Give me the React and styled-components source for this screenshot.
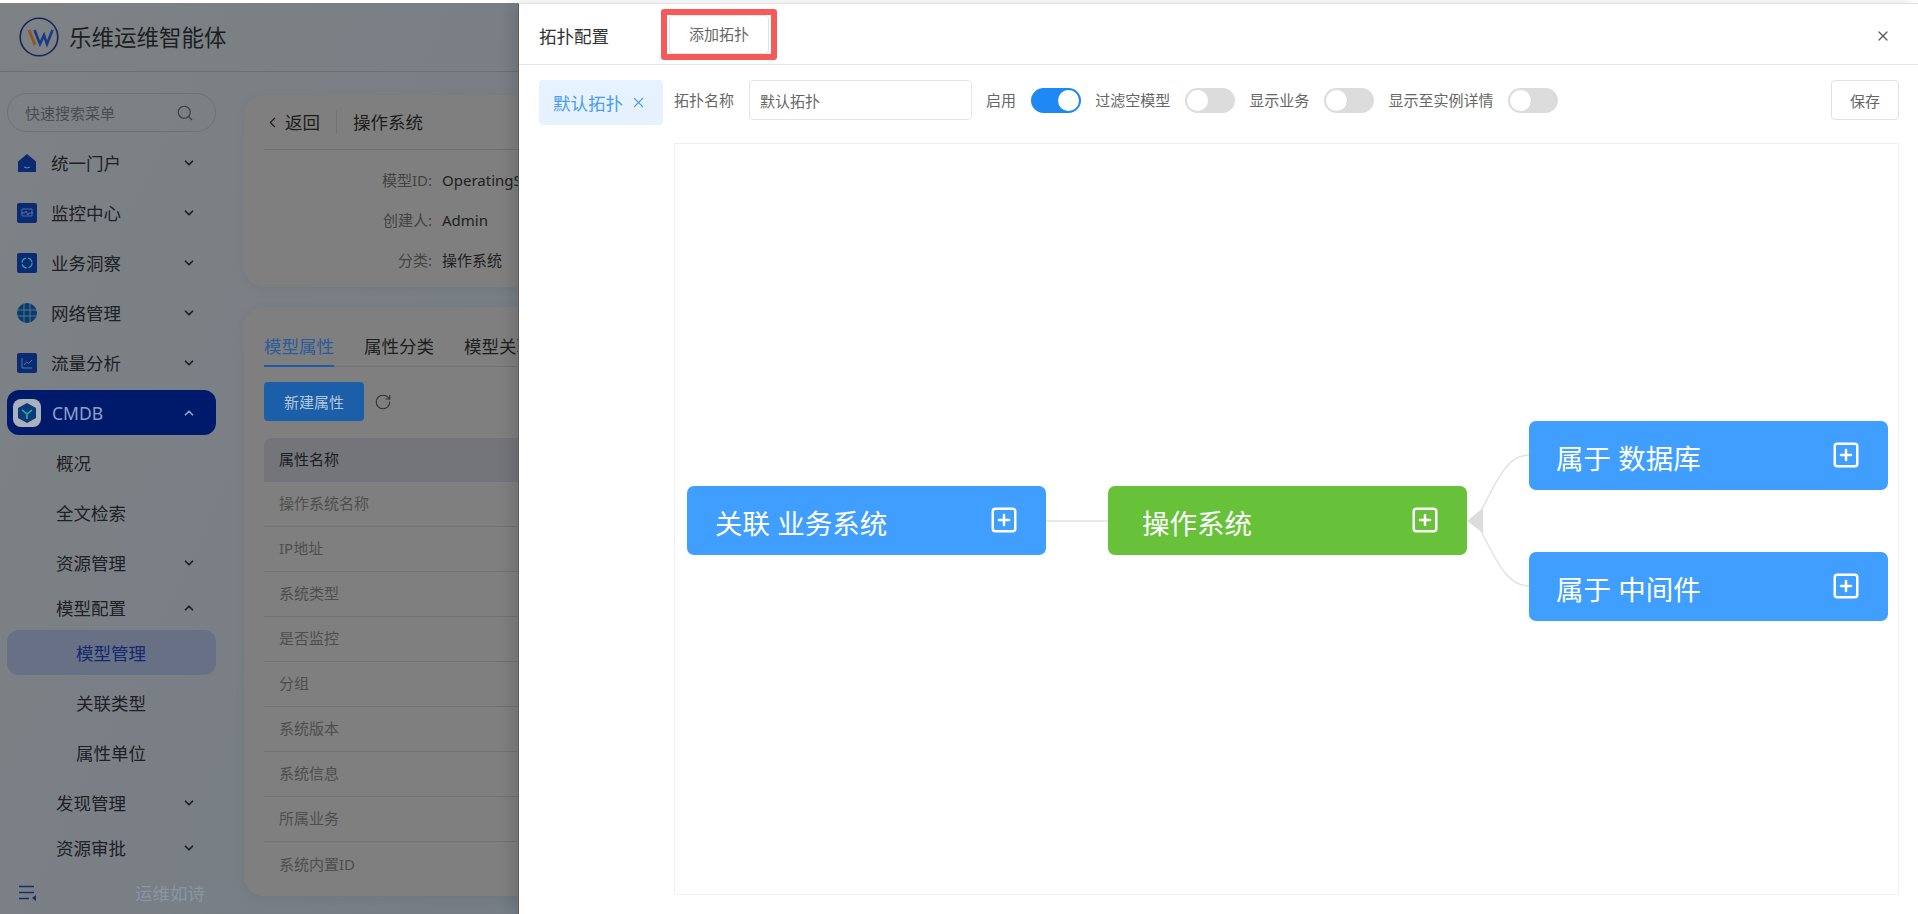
import styled, { createGlobalStyle } from "styled-components";
import { ChevronDown, ChevronUp, ChevronLeft, Search, RotateCw, X, SquarePlus } from "lucide-react";

const GlobalStyle = createGlobalStyle`
  html, body {
    margin: 0;
    padding: 0;
    background: #fff;
  }
  * {
    box-sizing: border-box;
  }
  body {
    font-family: "Noto Sans", "Noto Sans CJK SC", sans-serif;
  }
`;

const Page = styled.div`
  position: relative;
  width: 1918px;
  height: 914px;
  padding-top: 3px;
  overflow: hidden;
  background: #fff;
`;

/* dimmed page behind the drawer */
const Shell = styled.div`
  width: 100%;
  height: 911px;
  display: flex;
  flex-direction: column;
  background: linear-gradient(115deg, #7e8285 0%, #747c85 45%, #787a7e 100%);
`;

const Header = styled.header`
  height: 69px;
  flex: none;
  display: flex;
  align-items: center;
  gap: 10px;
  padding: 0 0 0 19px;
  border-bottom: 1px solid #6c6f72;
  font-size: 22.5px;
  line-height: 30px;
  color: #1c1f22;
  span {
    padding-top: 2px;
  }
`;

const Main = styled.div`
  flex: 1;
  min-height: 0;
  display: flex;
`;

const Sidebar = styled.aside`
  width: 244px;
  flex: none;
  padding: 21px 0 0 7px;
`;

const SearchBox = styled.div`
  width: 209px;
  height: 39px;
  display: flex;
  align-items: center;
  justify-content: space-between;
  padding: 0 21px 0 17px;
  margin-bottom: 8px;
  border: 1px solid #6e7378;
  border-radius: 20px;
  font-size: 15px;
  line-height: 20px;
  color: #4a4d50;
  svg {
    color: #3c3f42;
  }
`;

const MenuRow = styled.div`
  width: 209px;
  height: 45px;
  display: flex;
  align-items: center;
  gap: 14px;
  margin-bottom: ${(p) => (p.$tight ? "0" : "5px")};
  padding-left: ${(p) => (p.$level === 2 ? "69px" : p.$level === 1 ? "49px" : p.$active ? "6px" : "10px")};
  border-radius: 12px;
  font-size: 17.5px;
  line-height: 24px;
  color: ${(p) => (p.$selected ? "#12296e" : p.$active ? "#8ea0c4" : "#1d2024")};
  background: ${(p) => (p.$active ? "#001a6b" : p.$selected ? "#687085" : "transparent")};
`;

const MenuLabel = styled.span`
  flex: 1;
`;

const Caret = styled.span`
  width: 14px;
  margin-right: 20px;
  display: flex;
  justify-content: center;
  color: ${(p) => (p.$light ? "#8ea0c4" : "#1d2024")};
`;

const SideFoot = styled.div`
  width: 209px;
  height: 45px;
  display: flex;
  align-items: center;
  justify-content: space-between;
  padding: 0 11px 0 12px;
  font-size: 17.5px;
  color: #8a95a3;
`;

const Content = styled.main`
  flex: 1;
  padding-top: 23px;
  display: flex;
  flex-direction: column;
  gap: 20px;
`;

const Card = styled.section`
  width: 1640px;
  height: ${(p) => p.$height}px;
  padding: 0 20px;
  background: #7f7f7f;
  border-radius: 20px;
  box-shadow: 0 2px 10px rgba(60, 64, 70, 0.1);
`;

const TitleBar = styled.div`
  height: 55px;
  display: flex;
  align-items: center;
  padding: 0 8px 0 0;
  border-bottom: 1px solid #6f7072;
  font-size: 17.5px;
  line-height: 24px;
  color: #1c1c1c;
`;

const BackLink = styled.span`
  display: flex;
  align-items: center;
  gap: 4px;
  padding-right: 16px;
  margin-right: 16px;
  border-right: 1px solid #737373;
`;

const InfoList = styled.dl`
  margin: 10px 0 0;
`;

const InfoRow = styled.div`
  height: 40px;
  display: flex;
  align-items: center;
  gap: 10px;
  font-size: 15px;
  line-height: 20px;
  dt {
    width: 168px;
    text-align: right;
    color: #444;
  }
  dd {
    margin: 0;
    color: #1e1e1e;
  }
`;

const Tabs = styled.div`
  height: 60px;
  display: flex;
  align-items: flex-end;
  border-bottom: 1px solid #727272;
`;

const Tab = styled.span`
  height: 30px;
  margin-right: 15px;
  padding-right: 15px;
  position: relative;
  font-size: 17.5px;
  line-height: 18px;
  white-space: nowrap;
  color: ${(p) => (p.$active ? "#2b5c9e" : "#1e1e1e")};
  border-bottom: 2px solid ${(p) => (p.$active ? "#1f5ba6" : "transparent")};
  margin-bottom: -1px;
  ${(p) => p.$active && "padding-right: 0; margin-right: 30px;"}
`;

const Actions = styled.div`
  display: flex;
  align-items: center;
  gap: 10px;
  margin: 15px 0 17px;
  color: #333;
`;

const PrimaryButton = styled.div`
  width: 100px;
  height: 39px;
  display: flex;
  align-items: center;
  justify-content: center;
  background: #1a5fa8;
  border-radius: 4px;
  font-size: 15px;
  color: #b5c6da;
`;

const TableHead = styled.div`
  height: 44px;
  display: flex;
  align-items: center;
  padding: 0 0 4px 15px;
  background: #73757a;
  border-radius: 8px 8px 0 0;
  font-size: 15px;
  color: #1c1c1c;
`;

const TableRow = styled.div`
  height: 45px;
  display: flex;
  align-items: center;
  padding: 0 0 3px 15px;
  border-bottom: ${(p) => (p.$last ? "none" : "1px solid #727272")};
  font-size: 15px;
  color: #4e4e4e;
`;

/* drawer */
const Drawer = styled.div`
  position: absolute;
  top: 3px;
  left: 518px;
  width: 1400px;
  height: 911px;
  display: flex;
  flex-direction: column;
  background: #fff;
  border-top: 1px solid #e2e2e2;
  border-left: 1px solid #5c5c5c;
  box-shadow: -6px 0 14px rgba(0, 0, 0, 0.12);
  color: #666;
`;

const DrawerHead = styled.div`
  height: 61px;
  flex: none;
  display: flex;
  align-items: center;
  padding: 0 20px;
  border-bottom: 1px solid #e6e6e6;
`;

const DrawerTitle = styled.h2`
  margin: 3px 60px 0 0;
  font-size: 17.5px;
  font-weight: 400;
  line-height: 24px;
  color: #333;
`;

const AddButton = styled.div`
  position: relative;
  width: 100px;
  height: 39px;
  margin-top: 1px;
  display: flex;
  align-items: center;
  justify-content: center;
  padding-bottom: 2px;
  border: 1px solid #e2e2e2;
  border-radius: 4px;
  font-size: 15px;
  color: #666;
`;

/* red annotation drawn over the button */
const Mark = styled.span`
  position: absolute;
  inset: -7px -9px;
  border: 6px solid #f55a5a;
  border-radius: 3px;
`;

const CloseButton = styled.span`
  margin: 4px 7px 0 auto;
  display: flex;
  color: #555;
`;

const DrawerBody = styled.div`
  flex: 1;
  min-height: 0;
  display: grid;
  grid-template-columns: 124px 1fr;
  column-gap: 11px;
  padding: 15px 20px 0;
`;

const TopoTab = styled.div`
  width: 124px;
  height: 45px;
  display: flex;
  align-items: center;
  gap: 7px;
  padding-left: 14px;
  background: #e6f2ff;
  border-radius: 4px;
  font-size: 17.5px;
  color: #4a9cf5;
`;

const Toolbar = styled.div`
  height: 40px;
  margin-bottom: 23px;
  display: flex;
  align-items: center;
  gap: 14.1px;
`;

const Field = styled.label`
  display: flex;
  align-items: center;
  gap: 15px;
  font-size: 15px;
  line-height: 20px;
  color: #666;
`;

const TextInput = styled.input`
  width: 223px;
  height: 40px;
  padding: 0 10px;
  border: 1px solid #e4e4e4;
  border-radius: 4px;
  font: inherit;
  color: #666;
  outline: none;
`;

const Switch = styled.span`
  width: 50px;
  height: 25px;
  padding: 2px;
  display: flex;
  justify-content: ${(p) => (p.$on ? "flex-end" : "flex-start")};
  border-radius: 13px;
  background: ${(p) => (p.$on ? "#1e88f5" : "#dcdcdc")};
  &::after {
    content: "";
    width: 21px;
    height: 21px;
    border-radius: 50%;
    background: #fff;
  }
`;

const SaveButton = styled.div`
  width: 68px;
  height: 40px;
  margin-left: auto;
  display: flex;
  align-items: center;
  justify-content: center;
  border: 1px solid #e2e2e2;
  border-radius: 4px;
  font-size: 15px;
  color: #666;
`;

const Canvas = styled.div`
  position: relative;
  width: 1225px;
  height: 752px;
  border: 1px solid #efefef;
`;

const Edges = styled.svg`
  position: absolute;
  inset: 0;
  width: 100%;
  height: 100%;
`;

const Node = styled.div`
  position: absolute;
  left: ${(p) => p.$x}px;
  top: ${(p) => p.$y}px;
  width: 359px;
  height: 69px;
  display: flex;
  align-items: center;
  justify-content: space-between;
  padding: 0 27px 0 ${(p) => p.$inset}px;
  border-radius: 7px;
  background: ${(p) => p.$color};
  color: #fff;
  font-size: 27.5px;
  line-height: 36px;
  span {
    padding-top: 7px;
  }
  svg {
    margin-top: -2px;
  }
`;

const Logo = () => (
  <svg width="40" height="40" viewBox="0 0 40 40" fill="none">
    <circle cx="20" cy="20" r="18.8" stroke="#14265e" strokeWidth="1.6" />
    <path d="M10 13l6 15" stroke="#8a5a20" strokeWidth="3" />
    <path d="M15.5 13l5.5 14 4-9 3 9 5.500-14" stroke="#173a88" strokeWidth="2.600" />
  </svg>
);

const MenuIcon = ({ kind }) => {
  const navy = "#0a2a72";
  if (kind === "home") {
    return (
      <svg width="20" height="20" viewBox="0 0 20 20">
        <path d="M1 8.500L10 1l9 7.500V19H1z" fill={navy} />
        <path d="M7 14q3 2 6 0" stroke="#6a87b0" strokeWidth="1" fill="none" />
      </svg>
    );
  }
  if (kind === "globe") {
    return (
      <svg width="20" height="20" viewBox="0 0 20 20" fill="none">
        <circle cx="10" cy="10" r="10" fill="#0a3a6e" />
        <path d="M0 7h20M0 13h20M7 0v20M13 0v20" stroke="#5a7a8c" strokeWidth="0.9" />
      </svg>
    );
  }
  return (
    <svg width="20" height="20" viewBox="0 0 20 20" fill="none">
      <rect width="20" height="20" rx="2" fill={navy} />
      {kind === "monitor" && <path d="M5 6h10v7H5zM4 10h4l1-2 2 4 1-2h4" stroke="#5d7fb0" strokeWidth="0.8" />}
      {kind === "insight" && <circle cx="10" cy="10" r="5" stroke="#2f9e9e" strokeWidth="1.300" strokeDasharray="6 2" />}
      {kind === "chart" && <path d="M5 5v10h10M7 12l2.500-3 2 1.500L15 7" stroke="#5d7fb0" strokeWidth="0.9" />}
    </svg>
  );
};

const CubeIcon = () => (
  <svg width="28" height="28" viewBox="0 0 28 28" fill="none">
    <rect width="28" height="28" rx="8" fill="#aab0bc" />
    <path d="M14 4l9 5v10l-9 5-9-5V9z" fill="#0b3a7a" />
    <path d="M9 11l5 4 5-4M14 15v5" stroke="#2fb0a0" strokeWidth="1.600" />
  </svg>
);

const CollapseIcon = () => (
  <svg width="18" height="16" viewBox="0 0 18 16" fill="none">
    <path d="M0 1.500h15M0 7.500h15M0 13.500h10" stroke="#14306e" strokeWidth="1.600" />
    <path d="M17 10v6l-4-3z" fill="#14306e" />
  </svg>
);

const menuTop = [
  { label: "统一门户", icon: "home" },
  { label: "监控中心", icon: "monitor" },
  { label: "业务洞察", icon: "insight" },
  { label: "网络管理", icon: "globe" },
  { label: "流量分析", icon: "chart" },
];

const attributes = ["操作系统名称", "IP地址", "系统类型", "是否监控", "分组", "系统版本", "系统信息", "所属业务", "系统内置ID"];

const plusIcon = <SquarePlus size={30} strokeWidth={2} />;

const App = () => {
  return (
    <Page>
      <GlobalStyle />
      <Shell>
        <Header>
          <Logo />
          <span>乐维运维智能体</span>
        </Header>
        <Main>
          <Sidebar>
            <SearchBox>
              快速搜索菜单
              <Search size={18} strokeWidth={1.500} />
            </SearchBox>
            {menuTop.map((item) => (
              <MenuRow key={item.label}>
                <MenuIcon kind={item.icon} />
                <MenuLabel>{item.label}</MenuLabel>
                <Caret><ChevronDown size={14} strokeWidth={3} /></Caret>
              </MenuRow>
            ))}
            <MenuRow $active>
              <CubeIcon />
              <MenuLabel style={{ marginLeft: -3 }}>CMDB</MenuLabel>
              <Caret $light><ChevronUp size={14} strokeWidth={3} /></Caret>
            </MenuRow>
            <MenuRow $level={1}>概况</MenuRow>
            <MenuRow $level={1}>全文检索</MenuRow>
            <MenuRow $level={1} $tight>
              <MenuLabel>资源管理</MenuLabel>
              <Caret><ChevronDown size={14} strokeWidth={3} /></Caret>
            </MenuRow>
            <MenuRow $level={1} $tight>
              <MenuLabel>模型配置</MenuLabel>
              <Caret><ChevronUp size={14} strokeWidth={3} /></Caret>
            </MenuRow>
            <MenuRow $level={2} $selected>模型管理</MenuRow>
            <MenuRow $level={2}>关联类型</MenuRow>
            <MenuRow $level={2}>属性单位</MenuRow>
            <MenuRow $level={1} $tight>
              <MenuLabel>发现管理</MenuLabel>
              <Caret><ChevronDown size={14} strokeWidth={3} /></Caret>
            </MenuRow>
            <MenuRow $level={1} $tight>
              <MenuLabel>资源审批</MenuLabel>
              <Caret><ChevronDown size={14} strokeWidth={3} /></Caret>
            </MenuRow>
            <SideFoot>
              <CollapseIcon />
              运维如诗
            </SideFoot>
          </Sidebar>
          <Content>
            <Card $height={192}>
              <TitleBar>
                <BackLink>
                  <ChevronLeft size={17} strokeWidth={1.500} />
                  返回
                </BackLink>
                操作系统
              </TitleBar>
              <InfoList>
                <InfoRow><dt>模型ID:</dt><dd>OperatingSystem</dd></InfoRow>
                <InfoRow><dt>创建人:</dt><dd>Admin</dd></InfoRow>
                <InfoRow><dt>分类:</dt><dd>操作系统</dd></InfoRow>
              </InfoList>
            </Card>
            <Card $height={589}>
              <Tabs>
                <Tab $active>模型属性</Tab>
                <Tab>属性分类</Tab>
                <Tab>模型关联</Tab>
              </Tabs>
              <Actions>
                <PrimaryButton>新建属性</PrimaryButton>
                <RotateCw size={18} strokeWidth={1.500} />
              </Actions>
              <TableHead>属性名称</TableHead>
              {attributes.map((name, i) => (
                <TableRow key={name} $last={i === attributes.length - 1}>{name}</TableRow>
              ))}
            </Card>
          </Content>
        </Main>
      </Shell>

      <Drawer>
        <DrawerHead>
          <DrawerTitle>拓扑配置</DrawerTitle>
          <AddButton>
            添加拓扑
            <Mark />
          </AddButton>
          <CloseButton><X size={16} strokeWidth={1.800} /></CloseButton>
        </DrawerHead>
        <DrawerBody>
          <TopoTab>
            默认拓扑
            <X size={17} strokeWidth={1.500} />
          </TopoTab>
          <div>
            <Toolbar>
              <Field>
                拓扑名称
                <TextInput defaultValue="默认拓扑" />
              </Field>
              <Field>启用<Switch $on /></Field>
              <Field>过滤空模型<Switch /></Field>
              <Field>显示业务<Switch /></Field>
              <Field>显示至实例详情<Switch /></Field>
              <SaveButton>保存</SaveButton>
            </Toolbar>
            <Canvas>
              <Edges fill="none" stroke="#e2e2e2" strokeWidth="1.500">
                <path d="M371 377H433" />
                <path d="M805 369C822 336 832 311 854 311" />
                <path d="M805 385C822 418 832 442 854 442" />
                <path d="M792 377L808 364V389Z" fill="#dcdcdc" stroke="none" />
              </Edges>
              <Node $x={12} $y={342} $inset={28} $color="#409eff">
                <span>关联 业务系统</span>
                {plusIcon}
              </Node>
              <Node $x={433} $y={342} $inset={34} $color="#67c23a">
                <span>操作系统</span>
                {plusIcon}
              </Node>
              <Node $x={854} $y={277} $inset={27} $color="#409eff">
                <span>属于 数据库</span>
                {plusIcon}
              </Node>
              <Node $x={854} $y={408} $inset={27} $color="#409eff">
                <span>属于 中间件</span>
                {plusIcon}
              </Node>
            </Canvas>
          </div>
        </DrawerBody>
      </Drawer>
    </Page>
  );
};

export default App;
